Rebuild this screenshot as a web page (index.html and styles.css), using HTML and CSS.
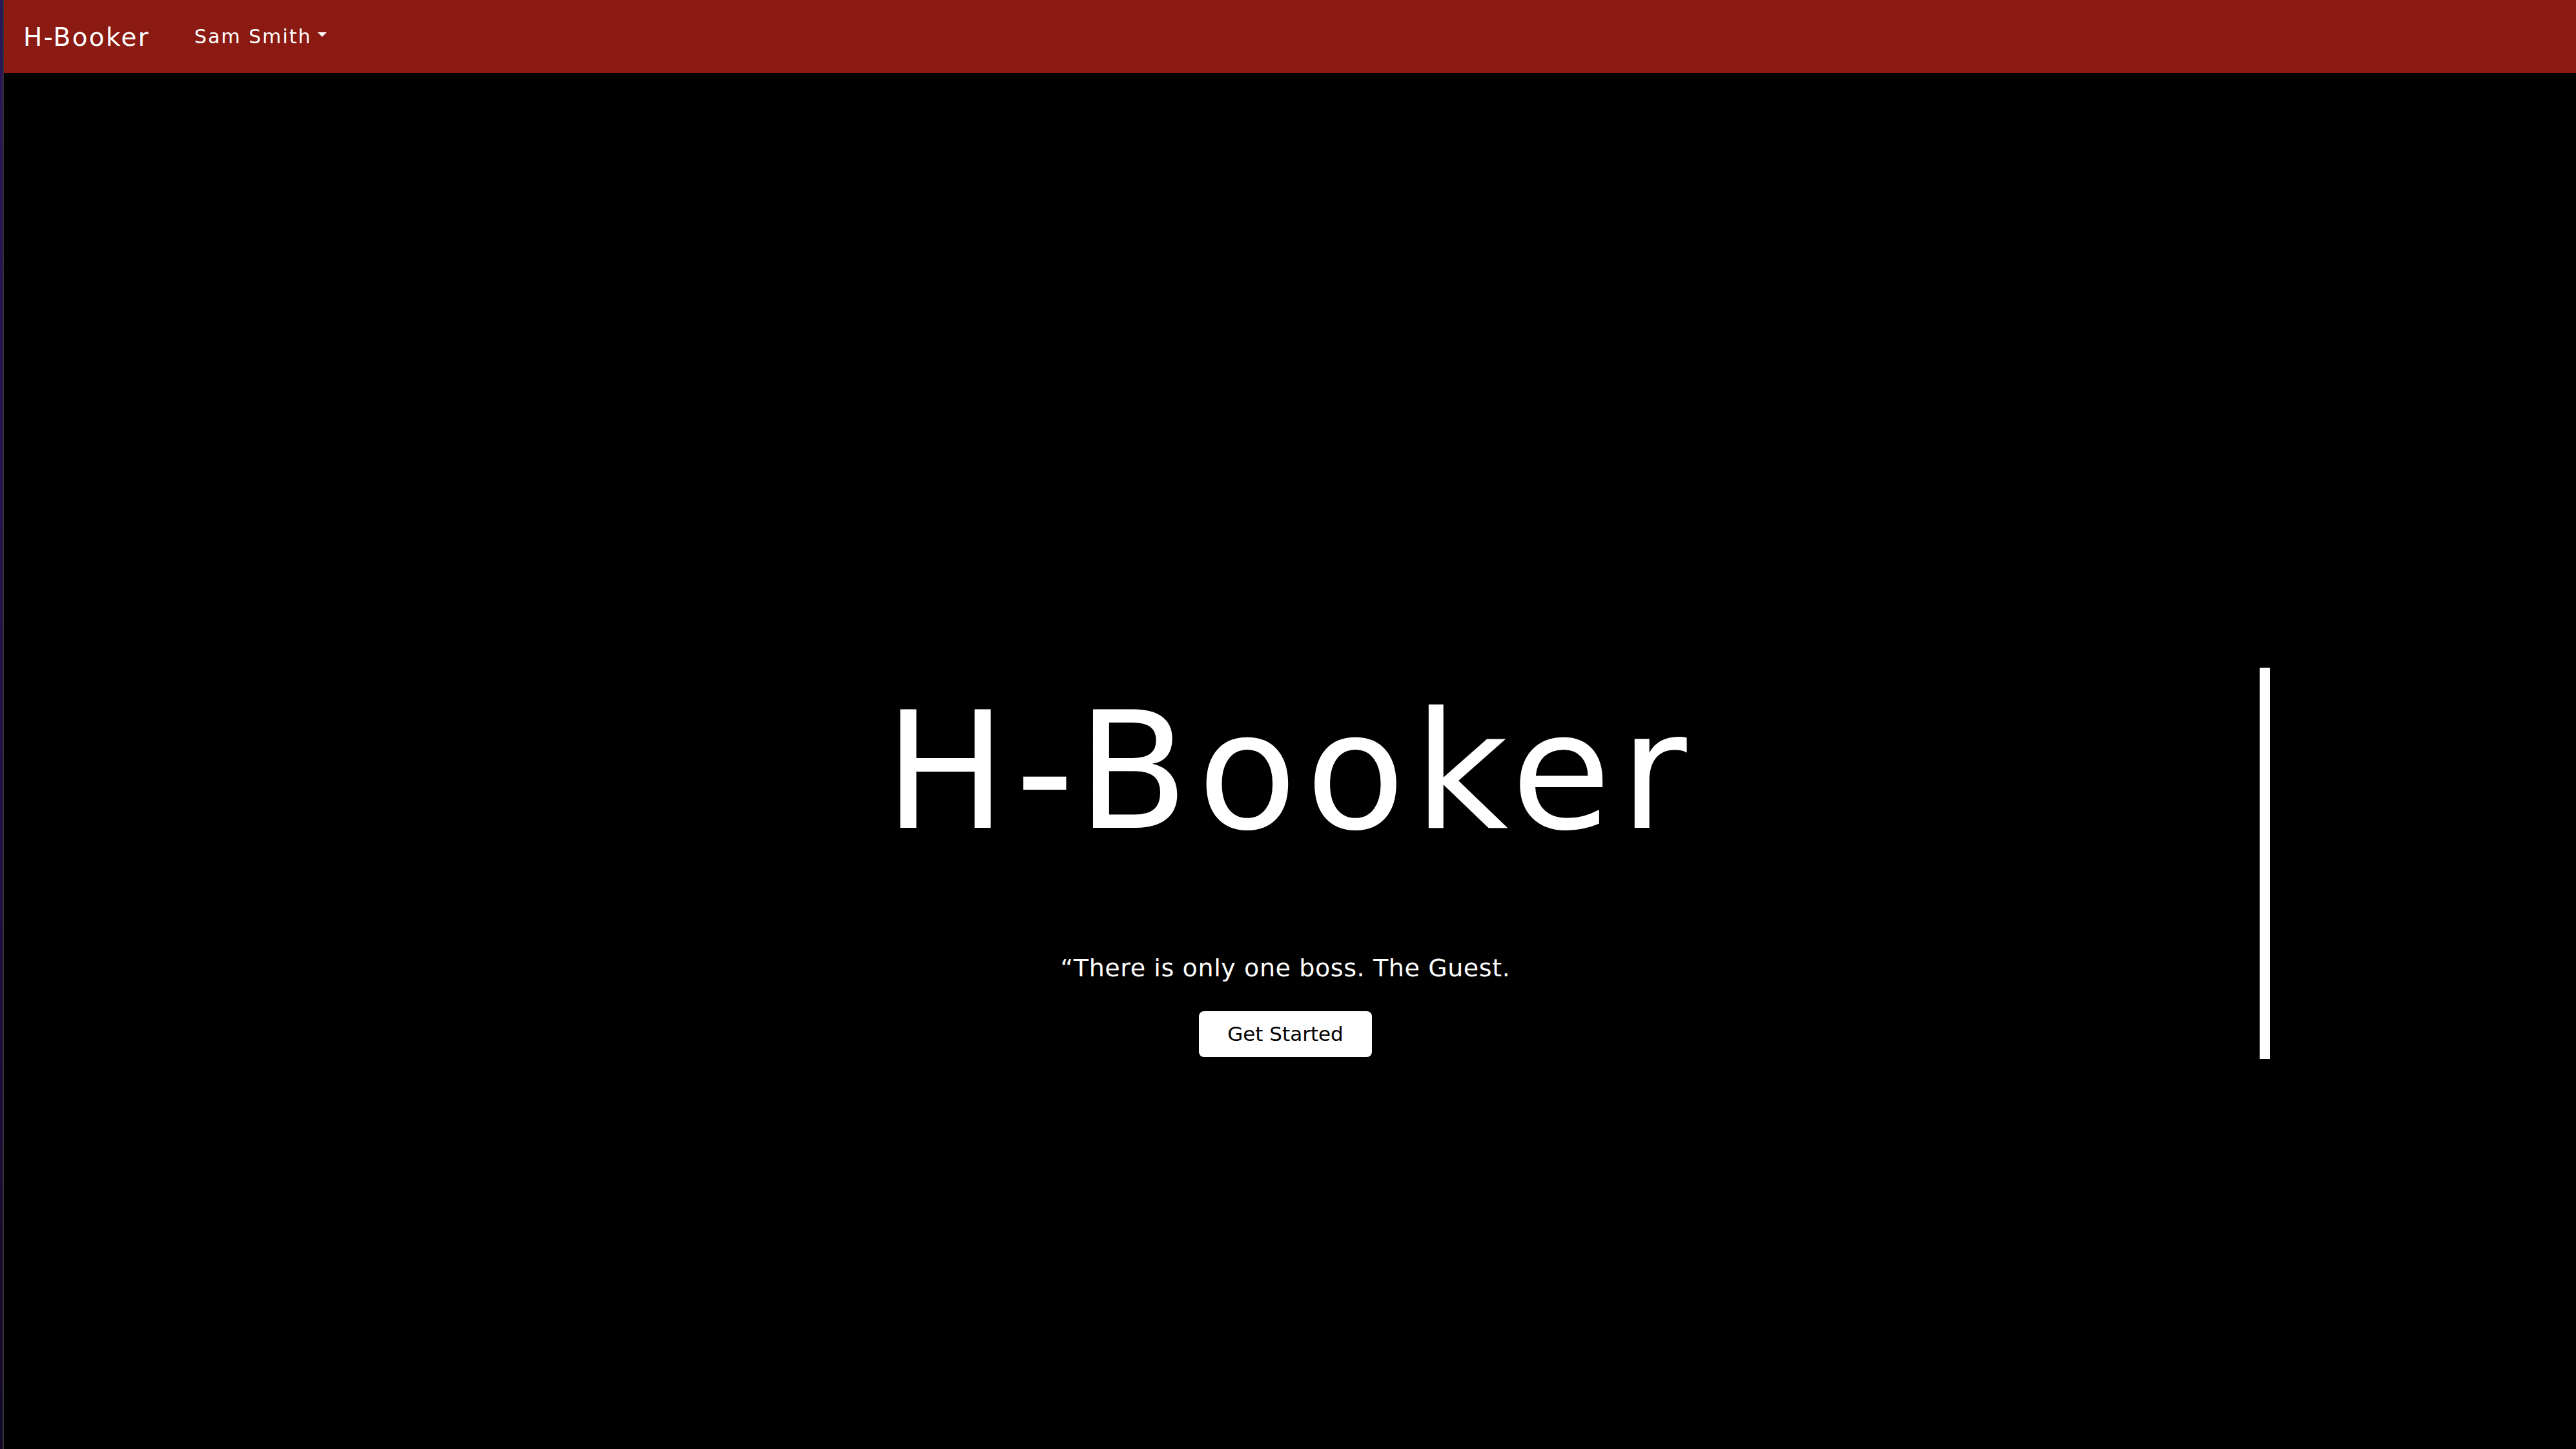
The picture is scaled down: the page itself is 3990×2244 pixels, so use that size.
FILE: index.html
```html
<!DOCTYPE html>
<html lang="en">
<head>
<meta charset="utf-8">
<title>H-Booker</title>
<link rel="stylesheet" href="styles.css">
</head>
<body>
<div class="shell">
  <div class="side-strip"></div>
  <div class="page">
    <nav class="navbar">
      <a class="brand" href="#">H-Booker</a>
      <a class="nav-link dropdown-toggle" href="#">Sam Smith<span class="caret"></span></a>
    </nav>
    <main class="hero">
      <h1 class="hero-title">H-Booker</h1>
      <p class="hero-quote">“There is only one boss. The Guest.</p>
      <a class="btn-start" href="#">Get Started</a>
      <span class="hero-bar"></span>
    </main>
  </div>
</div>
</body>
</html>
```

FILE: styles.css
```css
* { box-sizing: border-box; }
html, body {
  margin: 0;
  padding: 0;
  background: #000;
  height: 100%;
}
body {
  font-family: "DejaVu Sans", "Liberation Sans", sans-serif;
  color: #fff;
}
.shell {
  display: flex;
  min-height: 2244px;
}
.side-strip {
  width: 4px;
  flex: none;
  background: linear-gradient(180deg, #2c1558 0%, #22104a 50%, #120826 100%);
}
.page {
  flex: 1;
  display: flex;
  flex-direction: column;
  border-left: 2px solid rgba(255, 255, 255, 0.2);
}
.navbar {
  height: 113px;
  background: #8b1a12;
  display: flex;
  align-items: center;
  padding-left: 30px;
  gap: 69px;
}
.brand {
  color: #fff;
  text-decoration: none;
  font-size: 39px;
  letter-spacing: 2.3px;
  line-height: 1;
  margin-top: 2px;
}
.nav-link {
  color: #fff;
  text-decoration: none;
  font-size: 30px;
  letter-spacing: 2px;
  line-height: 1;
  display: inline-flex;
  align-items: center;
}
.caret {
  display: inline-block;
  width: 0;
  height: 0;
  margin-left: 9px;
  margin-top: -6px;
  border-top: 7px solid #fff;
  border-left: 7.5px solid transparent;
  border-right: 7.5px solid transparent;
}
.hero {
  position: relative;
  flex: 1;
  display: flex;
  flex-direction: column;
  align-items: center;
  padding-top: 931px;
  padding-right: 14px;
}
.hero-title {
  margin: 0;
  font-weight: 400;
  font-size: 252px;
  line-height: 1.2;
  letter-spacing: 13.5px;
  padding-left: 14px;
}
.hero-quote {
  margin: 125px 0 0;
  font-size: 38px;
  line-height: 1.5;
  letter-spacing: 0.6px;
}
.btn-start {
  margin-top: 38px;
  width: 268px;
  height: 71px;
  display: inline-flex;
  align-items: center;
  justify-content: center;
  background: #fff;
  color: #000;
  text-decoration: none;
  border-radius: 8px;
  font-size: 31px;
  line-height: 1;
}
.hero-bar {
  position: absolute;
  top: 921px;
  right: 474px;
  width: 16px;
  height: 606px;
  background: #fff;
}
```
